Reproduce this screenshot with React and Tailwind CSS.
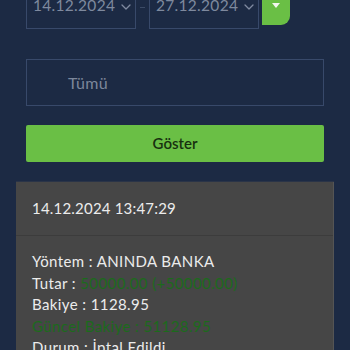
import React from "react";

function Chevron() {
  return (
    <svg width="10" height="6" viewBox="0 0 10 6" fill="none" className="shrink-0">
      <path d="M1 1l4 4 4-4" stroke="#7f8aa0" strokeWidth="1.3" strokeLinecap="round" strokeLinejoin="round" />
    </svg>
  );
}

export default function App() {
  const font = { fontFamily: "Lato, 'Open Sans', sans-serif" };
  return (
    <div className="w-[350px] h-[350px] overflow-hidden bg-[#1c2a44]" style={font}>
      <div className="flex items-start pl-[26px] -mt-[15px]">
        <div className="w-[110px] h-[44px] border border-[#38496a] flex items-center justify-between pl-[6px] pr-[4px]">
          <span className="text-[15.5px] text-[#7e899e] tracking-[0.3px] -mt-[3px]">14.12.2024</span>
          <Chevron />
        </div>
        <div className="w-[13px] h-[44px] flex items-center justify-center">
          <div className="w-[5px] h-px bg-[#3c4b66]" />
        </div>
        <div className="w-[110px] h-[44px] border border-[#38496a] flex items-center justify-between pl-[6px] pr-[4px]">
          <span className="text-[15.5px] text-[#7e899e] tracking-[0.3px] -mt-[3px]">27.12.2024</span>
          <Chevron />
        </div>
        <div className="ml-[3px] w-[28px] h-[40px] bg-[#6abf45] rounded-br-[9px] flex items-center justify-center">
          <svg width="8" height="5" viewBox="0 0 8 5" className="mt-[1px]">
            <path d="M0 0h8L4 5z" fill="#f2f6ee" />
          </svg>
        </div>
      </div>

      <div className="ml-[26px] mt-[30px] w-[298px] h-[47px] border border-[#38496a] flex items-center pl-[41px]">
        <span className="text-[16px] text-[#7c879b] tracking-[0.3px]">Tümü</span>
      </div>

      <div className="ml-[26px] mt-[19px] w-[298px] h-[37px] bg-[#6abf45] rounded-[2px] flex items-center justify-center">
        <span className="text-[15px] font-semibold text-[#17300f]">Göster</span>
      </div>

      <div className="ml-[16px] mt-[20px] w-[318px] bg-[#464646] border-r border-[#555555] shadow-[0_-1px_0_#2a3448]">
        <div className="h-[54px] flex items-center pl-[16px] border-b border-[#3c3c3c]">
          <span className="text-[15px] text-[#ececec] tracking-[0.2px]">14.12.2024 13:47:29</span>
        </div>
        <div className="pl-[16px] pt-[15px] text-[15px] leading-[21.5px] text-[#ececec] tracking-[0.4px]">
          <div>Yöntem : ANINDA BANKA</div>
          <div>
            Tutar : <span className="text-[#1c6a1c]">50000.00 (+50000.00)</span>
          </div>
          <div>Bakiye : 1128.95</div>
          <div className="text-[#1c6a1c]">Güncel Bakiye : 51128.95</div>
          <div>Durum : İptal Edildi</div>
        </div>
      </div>
    </div>
  );
}
